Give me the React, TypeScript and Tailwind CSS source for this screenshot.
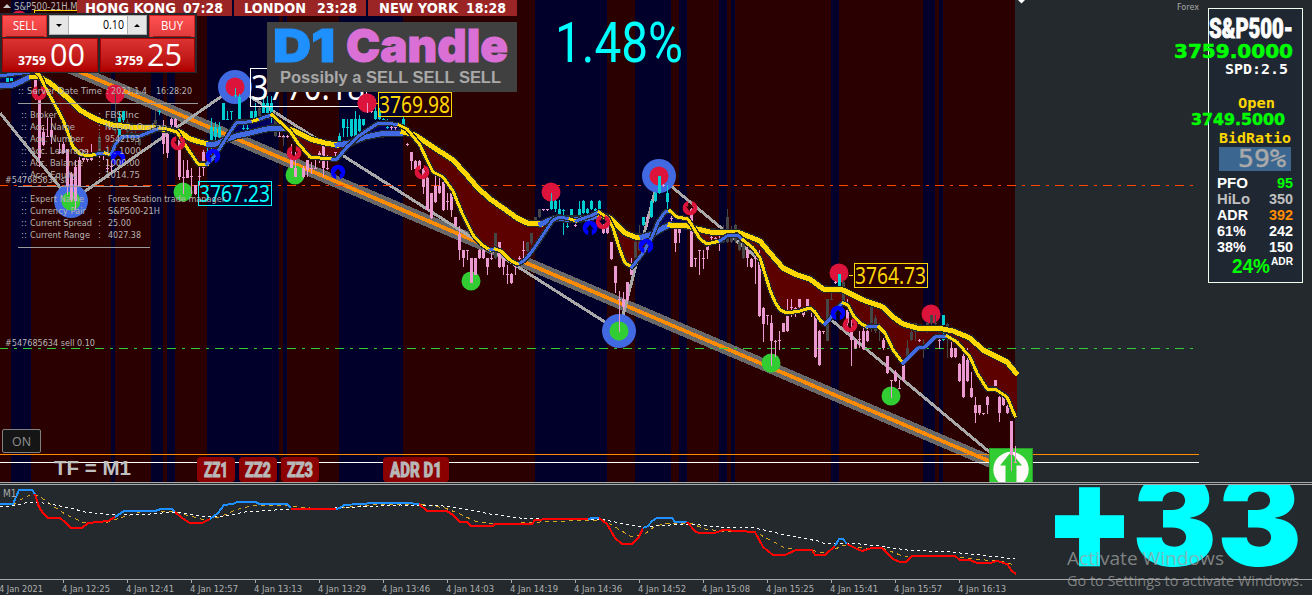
import React, { useLayoutEffect, useRef } from "react";

type Pt = [number, number];
type Run = { c: string; p: Pt[] };

const GOLD = "#ffd700";
const ROYAL = "#4169e1";

/* Stretches its text horizontally so that it fills a fixed width. */
function Fit({ w, className = "", children }: { w: number; className?: string; children: React.ReactNode }) {
  const ref = useRef<HTMLSpanElement>(null);
  useLayoutEffect(() => {
    const el = ref.current;
    if (el && el.offsetWidth) {
      el.style.transform = "none";
      el.style.transform = `scaleX(${w / el.getBoundingClientRect().width})`;
    }
  }, [w]);
  return (
    <span className="flex shrink-0" style={{ width: w }}>
      <span ref={ref} className={`block shrink-0 origin-left whitespace-pre ${className}`}>
        {children}
      </span>
    </span>
  );
}

const parse = (s: string): Pt[] => s.trim().split(/\s+/).map((q) => q.split(",").map(Number) as Pt);

const runs = (list: [string, string][]): Run[] => list.map(([c, s]) => ({ c, p: parse(s) }));

const bands: Pt[] = [
  [11, 31], [111, 115], [151, 163], [167, 175], [207, 279], [283, 287], [339, 403], [535, 607],
  [635, 671], [679, 687], [719, 727], [731, 735], [831, 839], [923, 935], [939, 943],
];

const slow = runs([
  [ROYAL, "0,86 13,85 22,81 31,76"],
  [GOLD, "31,76 38,76 43,79 50,83 60,91 70,100 80,110 90,116 100,121 113,125 130,127 155,128 170,130 180,132 190,139 200,142 208,144"],
  [ROYAL, "208,144 216,144 225,140 236,136 250,133 262,130 272,128 286,128"],
  [GOLD, "286,128 297,132 310,139 325,143 337,145"],
  [ROYAL, "337,145 350,143 365,137 380,134 403,133"],
  [GOLD, "403,132 415,135 430,145 453,160 465,173 477,187 490,199 503,208 517,218 527,223 541,224"],
  [ROYAL, "541,224 550,220 557,218 565,219 580,219 590,218 600,215"],
  [GOLD, "600,215 610,218 617,225 625,233 635,237 642,237"],
  [ROYAL, "642,237 653,234 663,228 670,225"],
  [GOLD, "670,225 687,226 697,229 710,232 740,233 750,237 760,241 770,253 783,268 797,275 810,279 823,289 843,290 863,300 883,307 893,317 903,324 917,328 943,329 953,331 970,338 983,350 1007,362 1016,373"],
]);

const fast = runs([
  [ROYAL, "0,76 14,74 30,72"],
  [GOLD, "36,72 40,76 45,87 55,105 63,120 68,133 73,147 80,154 88,156 97,154"],
  [ROYAL, "97,154 105,153"],
  [GOLD, "105,153 111,155"],
  [ROYAL, "111,155 115,145 120,138 127,136 140,136 150,132 160,128"],
  [GOLD, "160,128 167,129 177,132 183,142 192,155 198,164 207,164"],
  [ROYAL, "207,164 213,158 220,148 230,132 237,122 247,122 253,121"],
  [GOLD, "253,121 260,119"],
  [ROYAL, "260,119 265,117 272,115"],
  [GOLD, "272,115 280,122 290,131 297,142 310,157 320,158 332,159"],
  [ROYAL, "332,159 337,159 347,147 360,135 377,124 387,123 399,125"],
  [GOLD, "399,125 407,129 420,145 427,160 433,172 443,177 453,191 462,213 473,235 482,245 490,250"],
  [ROYAL, "490,250 495,249"],
  [GOLD, "495,249 501,251 510,260 517,264 520,263"],
  [ROYAL, "520,263 525,260 533,250 543,235 553,220 560,217 570,219"],
  [GOLD, "570,219 576,221"],
  [ROYAL, "576,221 590,216 599,212"],
  [GOLD, "599,212 608,218 613,228 620,250 625,263 632,267"],
  [ROYAL, "632,267 643,253 652,237 658,222 665,212 670,211"],
  [GOLD, "670,211 677,217 688,219 693,227 700,239 707,244 720,241"],
  [ROYAL, "720,241 727,236 737,235 743,240"],
  [GOLD, "743,240 753,248 760,258 765,274 770,290 775,302 780,310 787,313 800,311 810,308 815,312 820,320 825,324"],
  [ROYAL, "825,324 830,319 835,310 843,303"],
  [GOLD, "843,303 848,305 853,315 860,323 867,327"],
  [ROYAL, "867,327 870,326 879,327"],
  [GOLD, "879,327 885,333 893,350 903,363"],
  [ROYAL, "903,363 918,348 925,347 935,337 947,336"],
  [GOLD, "947,336 957,342 970,357 977,373 987,389 995,389 1007,397 1015,416"],
]);

const at = (pts: Pt[], x: number) => {
  for (let i = 1; i < pts.length; i++) {
    if (x <= pts[i][0]) {
      const [x0, y0] = pts[i - 1];
      const [x1, y1] = pts[i];
      return x1 === x0 ? y1 : y0 + ((y1 - y0) * (x - x0)) / (x1 - x0);
    }
  }
  return pts[pts.length - 1][1];
};

/* Shaded ribbon between the two averages: red while the fast one is below, blue above. */
const ribbon = (() => {
  const s = slow.flatMap((r) => r.p);
  const f = fast.flatMap((r) => r.p);
  let down = "";
  let up = "";
  for (let x = 0; x < 1017; x++) {
    const a = Math.round(at(s, x));
    const b = Math.round(at(f, x));
    if (b > a) down += `M${x} ${a}h1V${b}h-1z`;
    else if (b < a) up += `M${x} ${b}h1V${a}h-1z`;
  }
  return { down, up };
})();

/* colour key, x, high, low, body top, body bottom */
const candleData = `
c7,78,82,78,82 c11,78,82,78,82 p35,76,100,80,96 p39,96,167,100,158 p43,127,146,132,145 p47,118,137,136,137 p51,118,144,130,137
p59,143,154,152,153 p63,142,154,144,153 p67,149,195,149,187 p71,172,202,174,200 p75,160,210,167,201 p79,152,186,160,186
p83,150,162,158,160 p87,150,162,158,160 p91,144,161,158,160 p99,148,158,152,153 g99,132,155,137,152 p103,152,160,154,155 g107,145,152,151,152 p107,160,172,168,169 p111,150,172,166,167
g115,94,134,130,131 c119,111,137,118,136 c123,111,122,111,120 g127,119,140,122,132 g131,130,140,132,138 g135,130,145,136,140 g139,135,146,137,145
g155,111,128,120,128 c159,110,115,111,112 p163,120,154,127,144 p167,132,158,134,153 p171,118,128,119,125 p175,118,135,119,130 p179,133,180,133,177
p183,160,194,177,178 p187,160,178,170,178 p191,168,194,176,177 p195,185,195,185,194 p199,165,185,176,177 p203,150,176,152,168 c207,148,155,152,153
c211,118,160,127,145 c215,122,144,127,137 c219,122,138,127,137 c223,103,120,103,120 c227,111,120,119,120 c231,111,120,111,112 c235,88,98,95,96 c239,94,120,97,119
c243,122,130,128,129 c247,122,130,128,129 c251,111,118,111,118 c255,103,120,111,118 g259,106,118,108,116 c263,94,113,103,113 c267,96,113,103,113 c271,96,123,103,114
g275,112,137,116,136 p279,126,137,136,137 p283,135,138,136,137 g283,137,146,137,138 p287,135,138,136,137 p291,144,168,157,168 p295,152,177,168,177 p303,166,178,168,177
p307,160,177,160,170 p311,162,174,168,169 p315,160,169,168,169 p319,151,163,153,155 p323,145,177,146,168 p327,155,170,168,169 p335,152,157,152,153
c339,133,142,136,142 c343,119,137,119,128 c347,119,137,127,128 c351,119,137,119,136 c355,111,136,119,136 c359,115,133,119,131 c363,119,126,119,125
p367,103,113,111,112 p371,111,113,111,112 c375,99,120,111,119 c379,108,120,111,119 c383,118,120,119,120 c387,119,129,127,128 p391,126,130,127,128 p395,126,130,127,128
c403,117,125,119,125 p407,143,146,144,145 p411,152,170,152,161 p415,160,169,161,169 p419,160,169,161,169 p423,168,194,169,187 p427,177,211,178,210 p431,193,219,193,218
p435,176,203,186,202 p439,178,194,186,193 p443,181,211,182,210 p447,193,210,201,202 p451,187,217,193,210 p455,217,227,217,226 p459,226,260,234,250
p463,250,267,250,258 p467,250,260,250,251 p471,258,283,258,283 p475,258,275,258,275 p479,249,259,250,258 p483,249,259,250,258 p487,258,275,258,267 p491,253,260,258,259
g495,233,259,233,258 p499,242,268,242,267 p503,258,275,258,267 p507,265,284,274,275 p511,273,284,274,283 p515,265,275,266,267 p519,256,260,258,259 p523,241,258,250,251
g527,242,252,242,251 g531,233,245,233,243 g535,217,222,217,221 g539,209,218,209,217 p543,209,211,209,210 c551,193,210,201,209 p547,209,211,209,210 c555,200,212,201,209
c559,200,216,209,215 c563,209,235,210,211 c567,216,228,226,227 c571,209,217,209,216 p575,224,227,225,226 c579,201,216,209,215 c583,200,214,201,213 c587,208,214,209,213
c591,200,210,201,209 c595,208,214,209,213 c599,200,210,201,209 p603,224,234,225,233 p607,225,234,225,233 p611,242,260,242,259 p615,266,293,266,283 p619,291,332,299,300
p623,292,310,299,307 p627,282,302,282,300 p631,258,275,269,275 g635,240,259,242,258 g639,225,251,242,250 c643,217,226,217,225 p647,216,227,217,218 c651,200,218,201,217
c655,192,202,193,201 c659,176,194,176,193 p663,184,187,185,186 c667,185,211,193,202 p671,209,221,218,219 p675,226,252,227,243 p679,226,243,227,233 p687,216,220,218,219
p691,208,267,209,267 p695,258,267,258,259 p699,250,275,250,251 p703,250,269,258,259 p707,245,259,246,250 p711,236,240,237,238 p715,237,240,238,239 p719,236,251,241,242
g723,225,243,234,242 g727,209,243,217,242 g731,226,243,230,242 g735,224,243,225,241 g739,240,251,242,250 g743,241,259,243,258 p747,246,267,250,258 p751,258,268,259,267
p755,255,284,258,259 p759,250,317,262,316 p763,307,342,308,324 p767,315,325,315,316 p771,315,366,323,341 p775,340,357,341,342 p779,331,350,340,341 p783,323,332,323,332
p787,299,332,316,331 p791,299,317,307,308 p795,307,317,308,309 p799,299,308,299,307 p803,307,317,307,315 p807,299,308,299,307 p811,307,317,308,309 p815,309,358,312,357
p819,330,366,331,365 p823,331,334,331,332 g827,299,341,299,341 g831,290,300,299,300 p835,281,284,282,283 c839,274,288,274,286 g843,280,304,282,301 p847,299,326,310,323
p851,320,366,332,340 p855,339,349,340,348 p859,331,348,339,340 p863,328,350,331,349 p867,330,342,331,341 g871,307,332,307,323 g875,315,333,318,331 g879,323,341,328,329
p883,338,350,340,348 p887,356,374,356,373 p891,380,398,380,381 p895,370,382,372,381 p899,380,389,388,389 p903,363,382,365,380 g907,340,358,348,357 g911,323,341,332,340
g915,323,341,323,332 p919,339,342,340,341 g923,339,358,345,347 g927,322,333,323,332 g931,315,325,315,323 g935,315,332,323,324 p939,339,349,340,341 c943,315,325,315,325
c943,331,341,334,340 g947,323,358,324,326 p951,340,358,348,357 p955,348,358,348,357 p959,363,382,364,381 p963,348,398,356,397 p967,348,382,360,381 p971,372,398,388,397
p975,397,423,405,413 p979,405,415,405,413 p983,413,415,413,414 p987,396,414,397,405 p995,380,386,380,386 p999,396,422,397,413 p1003,396,406,397,405 p1007,405,414,406,413`;

const hue: Record<string, string> = { c: "#00ced1", p: "#ea9ad0", g: "#464646" };
const candles = candleData.trim().split(/\s+/).map((s) => {
  const [x, h, l, t, b] = s.slice(1).split(",").map(Number);
  return { f: hue[s[0]], x, h, l, t, b };
});

const line = (p: Pt[]) => p.map((q) => q.join(",")).join(" ");

function Average({ data, w }: { data: Run[]; w: number }) {
  return (
    <g fill="none" strokeLinejoin="round" shapeRendering="crispEdges">
      <polyline points={line(data.flatMap((r) => r.p))} stroke="#23292d" strokeWidth={w + 2.4} />
      {data.map((r, i) => (
        <polyline key={i} points={line(r.p)} stroke={r.c} strokeWidth={w} strokeLinecap="square" />
      ))}
    </g>
  );
}

function Dot({ x, y, c, big }: { x: number; y: number; c: string; big?: boolean }) {
  return (
    <g>
      {big && <circle cx={x} cy={y} r={17} fill={ROYAL} />}
      <circle cx={x} cy={y} r={9.5} fill={c} />
    </g>
  );
}

/* Disc with a carved arrow whose shaft opens the rim. */
function Signal({ x, y, up }: { x: number; y: number; up?: boolean }) {
  return (
    <g transform={`translate(${x} ${y})${up ? " scale(1 -1)" : ""}`}>
      <path
        d="M-1.800 -7.100A7.300 7.300 0 1 0 1.800 -7.100V-1.500H4L0 3.500L-4 -1.500H-1.800Z"
        fill={up ? "#0000ff" : "#dc143c"}
      />
    </g>
  );
}

function PriceTag({ x, y, w, h, size, color, base, children }: { x: number; y: number; w: number; h: number; size: number; color: string; base: number; children: string }) {
  return (
    <g>
      <rect x={x + 0.5} y={y + 0.5} width={w} height={h} fill="none" stroke={color} />
      <text x={x + 1} y={base} fontSize={size} fill={color} textLength={w - 2} lengthAdjust="spacingAndGlyphs" fontFamily="'Noto Sans', sans-serif">
        {children}
      </text>
    </g>
  );
}

function Chart() {
  return (
    <svg className="block" width="1312" height="482" viewBox="0 0 1312 482">
      <rect width="1015" height="482" fill="#2b0000" />
      {bands.map(([a, b]) => (
        <rect key={a} x={a} width={b - a} height="482" fill="#00002b" />
      ))}
      <g shapeRendering="crispEdges" fill="none">
        <rect x="34.5" y="10.5" width="44" height="20" stroke={GOLD} />
        <line x1="60" y1="63.4" x2="1005" y2="467.9" stroke="#696969" strokeWidth="12" />
        <line x1="60" y1="63.4" x2="1005" y2="467.9" stroke="#ff8c00" strokeWidth="3.8" />
        <polyline points="0,113 71,201 235,87 619,331 659,176 1011,470" stroke="#a9a9a9" strokeWidth="3" />
        <path d="M-1 185.5H1193" stroke="#ff4500" strokeDasharray="9 6 3 6" />
        <path d="M-1 348.5H1193" stroke="#32cd32" strokeDasharray="9 6 3 6" />
      </g>
      <circle cx="19" cy="20" r="9.5" fill="#dc143c" />
      {[[115, 94], [367, 103], [551, 192], [839, 273], [931, 314]].map(([x, y]) => (
        <Dot key={x} x={x} y={y} c="#dc143c" />
      ))}
      {[[183, 192], [295, 175], [471, 281], [771, 363], [891, 396]].map(([x, y]) => (
        <Dot key={x} x={x} y={y} c="#32cd32" />
      ))}
      <Dot x={235} y={87} c="#dc143c" big />
      <Dot x={659} y={176} c="#dc143c" big />
      <Dot x={71} y={201} c="#32cd32" big />
      <Dot x={619} y={331} c="#32cd32" big />
      <path d={ribbon.down} fill="#5c0000" shapeRendering="crispEdges" />
      <path d={ribbon.up} fill="#00005c" shapeRendering="crispEdges" />
      <g shapeRendering="crispEdges">
        {candles.map((k, i) => (
          <g key={i} fill={k.f}>
            <rect x={k.x} y={k.h} width="1" height={k.l - k.h} />
            <rect x={k.x - 1} y={k.t} width="3" height={k.b - k.t} />
          </g>
        ))}
      </g>
      <Average data={slow} w={5} />
      <Average data={fast} w={3} />
      {[[39, 93], [178, 143], [294, 153], [422, 172], [603, 222], [690, 208], [850, 325]].map(([x, y]) => (
        <Signal key={x} x={x} y={y} />
      ))}
      {[[118, 158], [213, 156], [338, 172], [590, 228], [646, 246], [838, 313]].map(([x, y]) => (
        <Signal key={x} x={x} y={y} up />
      ))}
      <g shapeRendering="crispEdges">
        <path d="M0 454.5H1199" stroke="#ff8c00" />
        <path d="M0 462.5H1199" stroke="#ffffff" />
      </g>
      <PriceTag x={250} y={68} w={116} h={38} size={34} base={100} color="#ffffff">3770.18</PriceTag>
      <PriceTag x={378} y={92} w={73} h={24} size={23} base={113} color={GOLD}>3769.98</PriceTag>
      <path d="M374 103.5H378M849 275.5H853" stroke={GOLD} />
      <PriceTag x={198} y={181} w={73} h={24} size={23} base={202} color="#00ffff">3767.23</PriceTag>
      <PriceTag x={854} y={263} w={73} h={24} size={23} base={284} color={GOLD}>3764.73</PriceTag>
      <Dot x={367} y={103} c="#dc143c" />
      <path d="M367.500 103V113" stroke="#ea9ad0" />
      <g fontSize="9.5" fill="#b8b8b8" fontFamily="'DejaVu Sans Condensed', 'DejaVu Sans', sans-serif">
        <text x="5" y="183" textLength="62" lengthAdjust="spacingAndGlyphs">#547685634 sl</text>
        <text x="5" y="346" textLength="90" lengthAdjust="spacingAndGlyphs">#547685634 sell 0.10</text>
      </g>
      <g>
        <rect x="989.5" y="448.5" width="43" height="40" fill="#32cd32" stroke="#2a9d2a" />
        <circle cx="1011" cy="469.5" r="17.7" fill="#fffafa" />
        <path d="M1011 452L1022 465.500H1016.500V483H1005.500V465.500H1000Z" fill="#32cd32" />
      </g>
      <g fill="#ea9ad0" shapeRendering="crispEdges">
        <rect x="1010" y="421" width="3" height="34" />
        <rect x="1011" y="421" width="1" height="50" />
        <rect x="1015" y="446" width="1" height="17" />
        <rect x="1014" y="462" width="3" height="1" />
      </g>
      <path d="M1018 0H1025L1021.500 3.500Z" fill="#ffffff" />
    </svg>
  );
}

const DODGER = "#1e90ff";
const trend = runs([
  [DODGER, "0,504 13,504 19,490 32,490 35,494"],
  ["#ff0000", "35,494 39,507 43,513 48,518 60,518 65,522 71,528 82,528 88,523 108,521 115,517"],
  [DODGER, "115,517 124,511 155,511 161,509 172,509 175,512"],
  ["#ff0000", "175,512 182,518 190,523 202,523 210,519"],
  [DODGER, "210,519 218,513 224,505 233,504 237,502 256,502 259,504 287,504 291,508"],
  ["#ff0000", "291,509 336,509"],
  [DODGER, "336,509 340,508 344,505 367,503.5 407,503 419,504"],
  ["#ff0000", "419,504 427,511 447,511 453,515 460,522 467,522 471,526 493,526 495,524 532,524 535,520 550,519 588,519"],
  [DODGER, "588,519 593,518 599,518"],
  ["#ff0000", "599,518 607,524 615,538 622,544 632,544 639,537 643,528"],
  [DODGER, "643,528 648,526 652,521 657,518 672,518 675,522 687,522"],
  ["#ff0000", "687,522 696,532 700,533 715,533 723,530 755,532 763,547 773,555 785,555 796,550 812,550 815,555 825,555 835,546"],
  [DODGER, "835,546 839,539 843,539 847,544"],
  ["#ff0000", "847,544 855,548 862,551 872,548 882,548 893,559 900,562 906,562 912,556 955,556 960,560 970,560 977,563 990,563 997,561 1007,564 1012,571 1016,574"],
]);
const whiteDash = "0,506 12,506 25,503 35,502 50,504 70,508 85,512 105,514 150,514 175,512 200,516 225,516 245,512 290,509 335,508 400,505 443,506 470,510 490,514 520,518 560,519 600,519 625,524 643,527 670,525 690,524 720,527 755,528 790,536 818,541 823,543 850,543 880,546 907,550 950,552 980,555 1015,559";
const goldDash = "13,505 20,500 30,495 38,495 50,504 65,514 82,522 105,523 120,518 140,512 172,511 190,516 205,520 220,517 235,510 255,505 290,506 310,508 340,508 380,504 420,504 445,508 460,514 475,521 495,524 540,522 590,520 605,521 620,530 632,537 645,534 655,526 670,523 690,523 705,529 720,531 755,532 770,540 785,548 815,551 825,553 835,549 845,545 865,548 885,549 905,557 950,556 985,560 1005,562 1014,565";

function Indicator() {
  return (
    <svg className="block" width="1312" height="94" viewBox="0 485 1312 94">
      <g fill="none" shapeRendering="crispEdges">
        <polyline points={goldDash} stroke="#daa520" strokeDasharray="4 4" />
        <polyline points={whiteDash} stroke="#ffffff" strokeDasharray="3 3" />
        {trend.map((r, i) => (
          <polyline key={i} points={line(r.p)} stroke={r.c} strokeWidth="2" strokeLinejoin="round" />
        ))}
      </g>
      <text x="3" y="497" fontSize="10" fill="#a9a9a9" fontFamily="'DejaVu Sans Condensed', sans-serif">M1</text>
    </svg>
  );
}

function Session({ city, time, cw, tw, className }: { city: string; time: string; cw: number; tw: number; className: string }) {
  return (
    <div className={`flex h-4 items-center bg-[#9b2424] font-['DejaVu_Sans'] text-[13.5px] leading-4 font-bold text-white ${className}`}>
      <Fit w={cw}>{city}</Fit>
      <Fit w={tw}>{time}</Fit>
    </div>
  );
}

function Cell({ tail }: { tail: string }) {
  return (
    <div className="flex h-[34px] flex-1 items-end justify-end border border-[#a00000] bg-linear-to-b from-[#dc3232] to-[#b00000] pr-3 text-white">
      <div className="pb-[3px] font-['Open_Sans'] text-[13px] leading-4 font-bold">
        <Fit w={28}>3759</Fit>
      </div>
      <div className="ml-1 font-['Open_Sans'] text-[31px] leading-[33px]">
        <Fit w={35}>{tail}</Fit>
      </div>
    </div>
  );
}

function TradePanel() {
  return (
    <div className="absolute top-[13px] left-0 flex h-[60px] w-[197px] flex-col gap-px bg-[#23292d] p-0.5 font-['Open_Sans']">
      <div className="flex h-[22px] justify-between">
        <div className="flex w-[45px] justify-center border border-b-0 border-[#d21f1f] bg-linear-to-b from-[#ff5050] to-[#e03a3a] text-white">
          <div className="flex h-[21px] w-[38px] justify-center border-b border-[#9e1414]">
            <Fit w={24} className="text-[12.5px] leading-[19px]">SELL</Fit>
          </div>
        </div>
        <div className="flex h-5 w-[98px] border border-[#b0b0b0] bg-white text-black">
          <div className="flex w-[19px] items-center justify-center border-r border-[#b0b0b0] bg-[#e6e6e6]">
            <div className="size-0 border-x-[3px] border-t-[3px] border-x-transparent border-t-black" />
          </div>
          <div className="flex flex-1 justify-end pr-[3px]">
            <Fit w={21} className="text-[12px] leading-[17px]">0.10</Fit>
          </div>
          <div className="flex w-[19px] items-center justify-center border-l border-[#b0b0b0] bg-[#e6e6e6]">
            <div className="size-0 border-x-[3px] border-b-[3px] border-x-transparent border-b-black" />
          </div>
        </div>
        <div className="flex w-[46px] justify-center border border-b-0 border-[#d21f1f] bg-linear-to-b from-[#ff5050] to-[#e03a3a] text-white">
          <div className="flex h-[21px] w-[38px] justify-center border-b border-[#9e1414]">
            <Fit w={22} className="text-[12.5px] leading-[19px]">BUY</Fit>
          </div>
        </div>
      </div>
      <div className="flex gap-0.5">
        <Cell tail="00" />
        <Cell tail="25" />
      </div>
    </div>
  );
}

const account: [string, string, number, number][] = [
  ["Broker", "FBS Inc", 27, 34],
  ["Acc. Name", "Nelson Orakan", 45, 62],
  ["Acc. Number", "9542193", 54, 35],
  ["Acc. Leverage", "1 : 1000", 59, 36],
  ["Acc. Balance", "1000.00", 53, 35],
  ["Acc. Equity", "1014.75", 47, 35],
];
const expert: [string, string, number, number][] = [
  ["Expert Name", "Forex Station trade manager", 54, 117],
  ["Currency Pair", "S&P500-21H", 56, 52],
  ["Current Spread", "25.00", 62, 23],
  ["Current Range", "4027.38", 60, 33],
];

function InfoRow({ row, gap }: { row: [string, string, number, number]; gap: string }) {
  return (
    <div className="flex h-3 items-center">
      <span className="w-[9px]">::</span>
      <span className="w-[68px]"><Fit w={row[2]}>{row[0]}</Fit></span>
      <span className={gap}>:</span>
      <Fit w={row[3]}>{row[1]}</Fit>
    </div>
  );
}

function AccountInfo() {
  return (
    <div className="absolute top-[85px] left-[21px] font-['DejaVu_Sans_Condensed'] text-[9.5px] leading-3 text-[#b4b4b4]">
      <div className="-ml-[3px] flex h-3 items-center">
        <span className="w-[9px]">::</span>
        <Fit w={75}>Server Date Time</Fit>
        <span className="w-[9px] pl-1">:</span>
        <Fit w={36}>2021.1.4</Fit>
        <span className="w-[9px]" />
        <Fit w={36}>16:28:20</Fit>
      </div>
      <div className="-ml-[3px] h-3 w-[180px] pt-[6px]"><div className="h-px bg-[#9a9a9a]" /></div>
      {account.map((r) => <InfoRow key={r[0]} row={r} gap="w-[7px]" />)}
      <div className="-ml-[3px] h-3 w-[132px] pt-[5px]"><div className="h-px bg-[#9a9a9a]" /></div>
      {expert.map((r) => <InfoRow key={r[0]} row={r} gap="w-[10px]" />)}
      <div className="-ml-[3px] h-3 w-[132px] pt-[6px]"><div className="h-px bg-[#9a9a9a]" /></div>
    </div>
  );
}

function Banner() {
  return (
    <div className="absolute top-[22px] left-[267px] h-[70px] w-[250px] bg-[#404040] pl-1.5">
      <div className="flex h-[46px] items-center gap-[11px] font-['Inter'] text-[46px] leading-[50px] font-black">
        <Fit w={62} className="text-[#1e90ff] [-webkit-text-stroke:1px_#1e90ff]">D1</Fit>
        <Fit w={162} className="text-[#da70d6] [-webkit-text-stroke:1px_#da70d6]">Candle</Fit>
      </div>
      <div className="pl-[7px] font-['Liberation_Sans'] text-base leading-[19px] font-bold text-[#a9a9a9]">
        <Fit w={221}>Possibly a SELL SELL SELL</Fit>
      </div>
    </div>
  );
}

const stats: [string, string, number, number, string, string][] = [
  ["PFO", "95", 31, 16, "text-white", "text-[#00ff00]"],
  ["HiLo", "350", 33, 24, "text-[#c0c0c0]", "text-[#c0c0c0]"],
  ["ADR", "392", 31, 24, "text-white", "text-[#ff8c00]"],
  ["61%", "242", 29, 24, "text-white", "text-white"],
  ["38%", "150", 29, 24, "text-white", "text-white"],
];

function QuotePanel() {
  return (
    <div className="absolute top-2 left-[1208px] flex h-[275px] w-[95px] flex-col items-end border border-[#f0fff0] bg-[#1f2832] pr-[9px] font-bold text-white">
      <div className="mt-[7px] font-['Roboto'] text-[27px] leading-[26px] font-black">
        <Fit w={84} className="[-webkit-text-stroke:0.8px_white]">S&amp;P500-</Fit>
      </div>
      <div className="font-['DejaVu_Sans'] text-[19px] leading-[18px] text-[#00ff00]">
        <Fit w={119} className="[-webkit-text-stroke:0.5px_#00ff00]">3759.0000</Fit>
      </div>
      <div className="mt-px mr-[5px] font-['DejaVu_Sans_Mono'] text-[13.5px] leading-4">
        <Fit w={63}>SPD:2.5</Fit>
      </div>
      <div className="mt-[18px] mr-[18px] font-['DejaVu_Sans_Mono'] text-[13.5px] leading-4 text-[#ffd700]">
        <Fit w={37}>Open</Fit>
      </div>
      <div className="mr-2 font-['DejaVu_Sans'] text-[16px] leading-[17px] text-[#00ff00]">
        <Fit w={94} className="[-webkit-text-stroke:0.4px_#00ff00]">3749.5000</Fit>
      </div>
      <div className="mt-0.5 mr-0.5 font-['DejaVu_Sans_Mono'] text-[14px] leading-4 text-[#ffd700]">
        <Fit w={72}>BidRatio</Fit>
      </div>
      <div className="mt-px mr-0.5 flex h-6 w-[72px] items-center justify-end bg-[#3b6690] pr-[5px] font-['DejaVu_Sans_Mono'] text-[25px] leading-[26px] font-normal text-[#a9a9a9]">
        <Fit w={48} className="[-webkit-text-stroke:0.5px_#a9a9a9]">59%</Fit>
      </div>
      <div className="mt-1 w-[76px] font-['Liberation_Sans'] text-[15.5px] leading-[15px]">
        {stats.map((s) => (
          <div key={s[0]} className="flex h-4 justify-between">
            <Fit w={s[2]} className={s[4]}>{s[0]}</Fit>
            <Fit w={s[3]} className={s[5]}>{s[1]}</Fit>
          </div>
        ))}
      </div>
      <div className="flex items-start gap-px font-['Liberation_Sans']">
        <Fit w={38} className="text-[21px] leading-[22px] text-[#00ff00]">24%</Fit>
        <Fit w={22} className="text-[11px] leading-[12px]">ADR</Fit>
      </div>
    </div>
  );
}

const zz: [string, number][] = [["ZZ1", 24], ["ZZ2", 26], ["ZZ3", 26]];

function ToolRow() {
  return (
    <div className="absolute top-[457px] left-[54px] flex h-[25px] items-center text-[#b8b8b8]">
      <div className="-mt-1 w-[143px] font-['Liberation_Sans'] text-[21px] leading-6 font-bold text-[#c0c0c0]">
        <Fit w={77}>TF = M1</Fit>
      </div>
      <div className="flex gap-1 font-['Roboto'] text-[20px] leading-6 font-black">
        {zz.map(([t, w]) => (
          <div key={t} className="flex h-[25px] w-[38px] items-center justify-center rounded-sm bg-[#8b0000]">
            <Fit w={w} className="[-webkit-text-stroke:0.8px_#b8b8b8]">{t}</Fit>
          </div>
        ))}
        <div className="ml-[60px] flex h-[25px] w-[66px] items-center justify-center rounded-sm bg-[#8b0000]">
          <Fit w={52} className="[-webkit-text-stroke:0.8px_#b8b8b8]">ADR D1</Fit>
        </div>
      </div>
    </div>
  );
}

const times = ["12:25", "12:41", "12:57", "13:13", "13:29", "13:46", "14:03", "14:19", "14:36", "14:52", "15:08", "15:25", "15:41", "15:57", "16:13"];

function TimeAxis() {
  return (
    <div className="flex h-4 overflow-hidden border-t border-[#a9a9a9] font-['DejaVu_Sans_Condensed'] text-[9.5px] leading-[17px] text-[#b0b0b0]">
      <div className="w-[63px] shrink-0">
        <div className="-ml-px"><Fit w={44}>4 Jan 2021</Fit></div>
      </div>
      {times.map((t) => (
        <div key={t} className="flex w-16 shrink-0">
          <div className="h-[3px] w-px bg-[#a9a9a9]" />
          <div className="-ml-[2px]"><Fit w={48}>{`4 Jan ${t}`}</Fit></div>
        </div>
      ))}
    </div>
  );
}

export default function App() {
  return (
    <div className="relative flex h-[595px] w-[1312px] flex-col overflow-hidden bg-[#23292d]">
      <section className="relative h-[482px] shrink-0 overflow-hidden">
        <Chart />
        <div className="absolute top-0 left-0 flex h-3 items-center gap-[3px] pl-[3px] font-['DejaVu_Sans_Condensed'] text-[10.5px] leading-3 text-[#b4b4b4]">
          <div className="size-0 border-x-[4px] border-b-[4px] border-x-transparent border-b-[#c8c8c8]" />
          <Fit w={69}>S&amp;P500-21H,M1</Fit>
        </div>
        <div className="absolute top-0 left-[77px] flex gap-0.5">
          <Session city="HONG KONG" time="07:28" cw={91} tw={40} className="w-[155px] gap-[7px] pl-2" />
          <Session city="LONDON" time="23:28" cw={62} tw={40} className="w-[132px] gap-[11px] pl-2.5" />
          <Session city="NEW YORK" time="18:28" cw={79} tw={40} className="w-[149px] gap-2 pl-[11px]" />
        </div>
        <TradePanel />
        <AccountInfo />
        <Banner />
        <div className="absolute top-[13px] left-[555px] font-['Roboto'] text-[56px] leading-[60px] text-[#00ffff]">
          <Fit w={128}>1.48%</Fit>
        </div>
        <div className="absolute top-0 left-[1177px] font-['DejaVu_Sans_Condensed'] text-[9.5px] leading-[13px] text-[#a9a9a9]">
          <Fit w={22}>Forex</Fit>
        </div>
        <QuotePanel />
        <div className="absolute top-[429px] left-[2px] flex h-6 w-[39px] items-center justify-center rounded-xs border border-[#808080] bg-[#151515] font-['Open_Sans'] text-[13px] leading-5 text-[#909090]">
          <Fit w={19}>ON</Fit>
        </div>
        <ToolRow />
      </section>
      <div className="h-[3px] shrink-0 border-y border-[#a9a9a9]" />
      <section className="relative h-[94px] shrink-0 overflow-hidden">
        <Indicator />
        <div className="absolute -top-[29px] left-[1044px] flex font-['Inter'] leading-[128px] font-black text-[#00ffff]">
          <Fit w={91} className="-mt-[3px] text-[150px] leading-[128px]">+</Fit>
          <div className="-ml-[3px]">
            <Fit w={170} className="text-[128px] leading-[128px]">33</Fit>
          </div>
        </div>
      </section>
      <TimeAxis />
      <div className="absolute top-[546px] left-[1067px] font-['Open_Sans'] text-[#a0a0a0]/75">
        <div className="text-[19px] leading-6"><Fit w={157}>Activate Windows</Fit></div>
        <div className="pt-px text-[14px] leading-5"><Fit w={236}>Go to Settings to activate Windows.</Fit></div>
      </div>
    </div>
  );
}
